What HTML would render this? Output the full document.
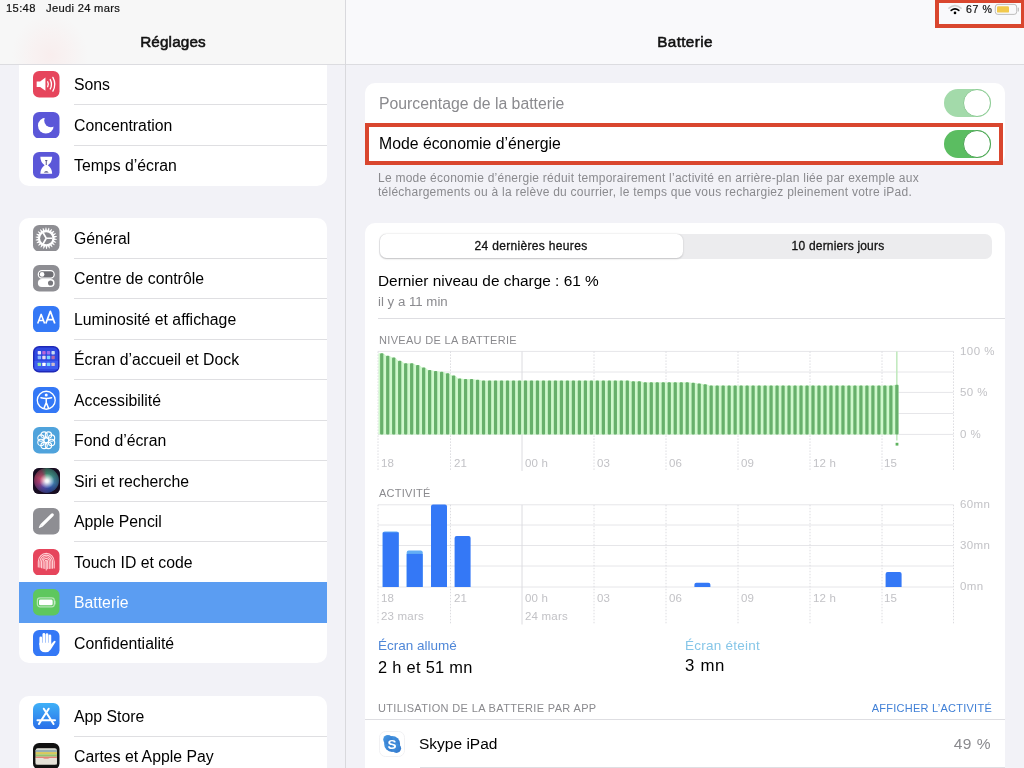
<!DOCTYPE html>
<html><head><meta charset="utf-8"><title>Batterie</title>
<style>
html,body{margin:0;padding:0;}
body{width:1024px;height:768px;overflow:hidden;position:relative;background:#f2f2f7;font-family:"Liberation Sans", sans-serif;}
.t{position:absolute;white-space:nowrap;-webkit-font-smoothing:antialiased;will-change:transform;}
.r{position:absolute;}
.ic{position:absolute;}
.ic svg{display:block;}
</style></head><body>
<div class="r" style="left:0px;top:0px;width:1024px;height:768px;background:#f2f2f7;border-radius:0px;"></div><div class="r" style="left:19px;top:20px;width:308px;height:165.5px;background:#fff;border-radius:10px;"></div><div class="ic" style="left:33px;top:71.00px;width:26.5px;height:26.5px;"><svg width="100%" height="100%" viewBox="0 0 26 26"><rect width="26" height="26" rx="6" fill="#e6455c"/><path d="M3.6 10.2h3.4l5.2-3.8v13l-5.2-3.8H3.6z" fill="#fff"/><path d="M14.4 10.6q1.3 2.4 0 4.8M16.9 8.4q2.5 4.6 0 9.2M19.5 6.2q3.7 6.8 0 13.6" stroke="#fff" stroke-width="1.3" fill="none" stroke-linecap="round"/></svg></div><div class="t" style="left:73.6px;top:77.18px;font-size:15.8px;line-height:15.8px;color:#000;font-weight:400;">Sons</div><div class="r" style="left:73.6px;top:104.0px;width:253.4px;height:0.6px;background:#dfdfe2;border-radius:0px;"></div><div class="ic" style="left:33px;top:111.50px;width:26.5px;height:26.5px;"><svg width="100%" height="100%" viewBox="0 0 26 26"><rect width="26" height="26" rx="6" fill="#5b57d8"/><circle cx="12.6" cy="13.4" r="7.7" fill="#fff"/><circle cx="17.6" cy="8.4" r="6.6" fill="#5b57d8"/></svg></div><div class="t" style="left:73.6px;top:117.68px;font-size:15.8px;line-height:15.8px;color:#000;font-weight:400;">Concentration</div><div class="r" style="left:73.6px;top:144.5px;width:253.4px;height:0.6px;background:#dfdfe2;border-radius:0px;"></div><div class="ic" style="left:33px;top:152.00px;width:26.5px;height:26.5px;"><svg width="100%" height="100%" viewBox="0 0 26 26"><rect width="26" height="26" rx="6" fill="#5b57d8"/><path d="M7.2 4.7H18.8Q18.8 10 14.6 13Q18.8 16 18.8 21.3H7.2Q7.2 16 11.4 13Q7.2 10 7.2 4.7z" fill="#fff"/><path d="M13 8.4v4.4M11.9 8.4h2.2" stroke="#3a3870" stroke-width="0.8"/><path d="M10.6 20.2q2.4-2.4 4.8 0z" fill="#3a3870"/></svg></div><div class="t" style="left:73.6px;top:158.18px;font-size:15.8px;line-height:15.8px;color:#000;font-weight:400;">Temps d’écran</div><div class="r" style="left:73.6px;top:63.5px;width:253.4px;height:0.6px;background:#dcdce0;border-radius:0px;"></div><div class="r" style="left:19px;top:217.5px;width:308px;height:445.5px;background:#fff;border-radius:10px;"></div><div class="ic" style="left:33px;top:224.50px;width:26.5px;height:26.5px;"><svg width="100%" height="100%" viewBox="0 0 26 26"><rect width="26" height="26" rx="6" fill="#8e8e93"/><polygon points="21.00,13.00 23.46,13.90 23.39,14.49 20.79,14.81 20.68,15.25 22.78,16.81 22.55,17.36 19.97,16.93 19.73,17.33 21.31,19.41 20.94,19.88 18.58,18.74 18.24,19.05 19.17,21.49 18.68,21.83 16.73,20.08 16.32,20.28 16.53,22.89 15.96,23.07 14.59,20.84 14.14,20.92 13.60,23.48 13.00,23.50 12.32,20.97 11.86,20.92 10.62,23.23 10.04,23.07 10.10,20.45 9.68,20.28 7.84,22.14 7.32,21.83 8.11,19.34 7.76,19.05 5.47,20.32 5.06,19.88 6.53,17.70 6.27,17.33 3.71,17.90 3.45,17.36 5.47,15.69 5.32,15.25 2.71,15.09 2.61,14.49 5.01,13.46 5.00,13.00 2.54,12.10 2.61,11.51 5.21,11.19 5.32,10.75 3.22,9.19 3.45,8.64 6.03,9.07 6.27,8.67 4.69,6.59 5.06,6.12 7.42,7.26 7.76,6.95 6.83,4.51 7.32,4.17 9.27,5.92 9.68,5.72 9.47,3.11 10.04,2.93 11.41,5.16 11.86,5.08 12.40,2.52 13.00,2.50 13.68,5.03 14.14,5.08 15.38,2.77 15.96,2.93 15.90,5.55 16.32,5.72 18.16,3.86 18.68,4.17 17.89,6.66 18.24,6.95 20.53,5.68 20.94,6.12 19.47,8.30 19.73,8.67 22.29,8.10 22.55,8.64 20.53,10.31 20.68,10.75 23.29,10.91 23.39,11.51 20.99,12.54" fill="#fff"/><circle cx="13" cy="13" r="6.0" fill="#88888d"/><path d="M13 13H19.2M13 13L9.9 7.6M13 13L9.9 18.4" stroke="#fff" stroke-width="1.6"/></svg></div><div class="t" style="left:73.6px;top:230.68px;font-size:15.8px;line-height:15.8px;color:#000;font-weight:400;">Général</div><div class="r" style="left:73.6px;top:257.5px;width:253.4px;height:0.6px;background:#dfdfe2;border-radius:0px;"></div><div class="ic" style="left:33px;top:265.00px;width:26.5px;height:26.5px;"><svg width="100%" height="100%" viewBox="0 0 26 26"><rect width="26" height="26" rx="6" fill="#8e8e93"/><rect x="5.2" y="5.6" width="15.6" height="7.2" rx="3.6" fill="#6f6f74" stroke="#fff" stroke-width="1.2"/><circle cx="8.9" cy="9.2" r="2.3" fill="#fff"/><rect x="4.8" y="13.8" width="16.4" height="7.8" rx="3.9" fill="#fff"/><circle cx="17.2" cy="17.7" r="2.5" fill="#77777c"/></svg></div><div class="t" style="left:73.6px;top:271.18px;font-size:15.8px;line-height:15.8px;color:#000;font-weight:400;">Centre de contrôle</div><div class="r" style="left:73.6px;top:298.0px;width:253.4px;height:0.6px;background:#dfdfe2;border-radius:0px;"></div><div class="ic" style="left:33px;top:305.50px;width:26.5px;height:26.5px;"><svg width="100%" height="100%" viewBox="0 0 26 26"><rect width="26" height="26" rx="6" fill="#3478f6"/><path d="M4.6 17.2L8 8.2l3.4 9M5.9 14.2h4.2" stroke="#fff" stroke-width="1.5" fill="none" stroke-linejoin="round"/><path d="M12.6 17.2L17 5.2l4.4 12M14.3 13.3h5.4" stroke="#fff" stroke-width="1.7" fill="none" stroke-linejoin="round"/></svg></div><div class="t" style="left:73.6px;top:311.68px;font-size:15.8px;line-height:15.8px;color:#000;font-weight:400;">Luminosité et affichage</div><div class="r" style="left:73.6px;top:338.5px;width:253.4px;height:0.6px;background:#dfdfe2;border-radius:0px;"></div><div class="ic" style="left:33px;top:346.00px;width:26.5px;height:26.5px;"><svg width="100%" height="100%" viewBox="0 0 26 26"><rect width="26" height="26" rx="6" fill="#1e28b8"/><rect x="1.4" y="1.4" width="23.2" height="23.2" rx="4.8" fill="#2f48e0"/><rect x="1.4" y="14.6" width="23.2" height="8" fill="#3d5cf0"/><rect x="4.6" y="5.0" width="3.3" height="3.3" rx="0.6" fill="#e6e4ff"/><rect x="9.1" y="5.0" width="3.3" height="3.3" rx="0.6" fill="#b966d8"/><rect x="13.6" y="5.0" width="3.3" height="3.3" rx="0.6" fill="#9a6ef0"/><rect x="18.1" y="5.0" width="3.3" height="3.3" rx="0.6" fill="#c9dcf2"/><rect x="4.6" y="9.6" width="3.3" height="3.3" rx="0.6" fill="#86b6ff"/><rect x="9.1" y="9.6" width="3.3" height="3.3" rx="0.6" fill="#ead6ea"/><rect x="13.6" y="9.6" width="3.3" height="3.3" rx="0.6" fill="#7fd4ff"/><rect x="18.1" y="9.6" width="3.3" height="3.3" rx="0.6" fill="#b56aa6"/><rect x="4.6" y="16.4" width="3.3" height="3.3" rx="0.6" fill="#93e2ab"/><rect x="9.1" y="16.4" width="3.3" height="3.3" rx="0.6" fill="#ffffff"/><rect x="13.6" y="16.4" width="3.3" height="3.3" rx="0.6" fill="#7fd2ff"/><rect x="18.1" y="16.4" width="3.3" height="3.3" rx="0.6" fill="#ccbccc"/></svg></div><div class="t" style="left:73.6px;top:352.18px;font-size:15.8px;line-height:15.8px;color:#000;font-weight:400;">Écran d’accueil et Dock</div><div class="r" style="left:73.6px;top:379.0px;width:253.4px;height:0.6px;background:#dfdfe2;border-radius:0px;"></div><div class="ic" style="left:33px;top:386.50px;width:26.5px;height:26.5px;"><svg width="100%" height="100%" viewBox="0 0 26 26"><rect width="26" height="26" rx="6" fill="#3478f6"/><circle cx="13" cy="13" r="8.8" fill="none" stroke="#fff" stroke-width="1.3"/><circle cx="13" cy="7.9" r="1.5" fill="#fff"/><path d="M7.8 10.5q5.2 1.5 10.4 0M13 11.2v4l-2.1 5.3M13 15.2l2.1 5.3" stroke="#fff" stroke-width="1.5" fill="none" stroke-linecap="round" stroke-linejoin="round"/></svg></div><div class="t" style="left:73.6px;top:392.68px;font-size:15.8px;line-height:15.8px;color:#000;font-weight:400;">Accessibilité</div><div class="r" style="left:73.6px;top:419.5px;width:253.4px;height:0.6px;background:#dfdfe2;border-radius:0px;"></div><div class="ic" style="left:33px;top:427.00px;width:26.5px;height:26.5px;"><svg width="100%" height="100%" viewBox="0 0 26 26"><rect width="26" height="26" rx="6" fill="#4fa3dc"/><circle cx="18.17" cy="15.14" r="3.1" fill="none" stroke="#fff" stroke-width="1.1"/><circle cx="15.14" cy="18.17" r="3.1" fill="none" stroke="#fff" stroke-width="1.1"/><circle cx="10.86" cy="18.17" r="3.1" fill="none" stroke="#fff" stroke-width="1.1"/><circle cx="7.83" cy="15.14" r="3.1" fill="none" stroke="#fff" stroke-width="1.1"/><circle cx="7.83" cy="10.86" r="3.1" fill="none" stroke="#fff" stroke-width="1.1"/><circle cx="10.86" cy="7.83" r="3.1" fill="none" stroke="#fff" stroke-width="1.1"/><circle cx="15.14" cy="7.83" r="3.1" fill="none" stroke="#fff" stroke-width="1.1"/><circle cx="18.17" cy="10.86" r="3.1" fill="none" stroke="#fff" stroke-width="1.1"/><circle cx="13" cy="13" r="2.4" fill="none" stroke="#fff" stroke-width="1"/></svg></div><div class="t" style="left:73.6px;top:433.18px;font-size:15.8px;line-height:15.8px;color:#000;font-weight:400;">Fond d’écran</div><div class="r" style="left:73.6px;top:460.0px;width:253.4px;height:0.6px;background:#dfdfe2;border-radius:0px;"></div><div class="ic" style="left:33px;top:467.50px;width:26.5px;height:26.5px;"><div style="width:100%;height:100%;border-radius:6px;overflow:hidden;position:relative;background:#1b1024;"><div style="position:absolute;left:0.8px;top:0.8px;right:0.8px;bottom:0.8px;border-radius:50%;background:radial-gradient(circle at 52% 52%, #ffffff 0, rgba(255,255,255,0.9) 9%, rgba(255,255,255,0) 40%),conic-gradient(from 0deg, #3f8a6e 0deg, #3f8f8a 60deg, #3f7fb0 110deg, #3050a8 160deg, #5a48a0 210deg, #a8407a 255deg, #c0486a 290deg, #904a60 330deg, #3f8a6e 360deg);"></div><div style="position:absolute;left:0;top:0;right:0;bottom:0;background:radial-gradient(circle at 50% 50%, rgba(20,10,30,0) 35%, rgba(20,10,30,0.45) 70%, rgba(20,10,30,0.85) 100%);"></div></div></div><div class="t" style="left:73.6px;top:473.68px;font-size:15.8px;line-height:15.8px;color:#000;font-weight:400;">Siri et recherche</div><div class="r" style="left:73.6px;top:500.5px;width:253.4px;height:0.6px;background:#dfdfe2;border-radius:0px;"></div><div class="ic" style="left:33px;top:508.00px;width:26.5px;height:26.5px;"><svg width="100%" height="100%" viewBox="0 0 26 26"><rect width="26" height="26" rx="6" fill="#8e8e93"/><path d="M20 5.6q1.1 1.1 0 2.2L9.3 18.5l-2.3-2.3L17.8 5.6q1.1-1.1 2.2 0z" fill="#fff"/><path d="M7 16.2l2.3 2.3l-3.1 1.1q-0.7 0.1-0.4-0.6z" fill="#fff"/></svg></div><div class="t" style="left:73.6px;top:514.18px;font-size:15.8px;line-height:15.8px;color:#000;font-weight:400;">Apple Pencil</div><div class="r" style="left:73.6px;top:541.0px;width:253.4px;height:0.6px;background:#dfdfe2;border-radius:0px;"></div><div class="ic" style="left:33px;top:548.50px;width:26.5px;height:26.5px;"><svg width="100%" height="100%" viewBox="0 0 26 26"><rect width="26" height="26" rx="6" fill="#e6455c"/><path d="M11.6 19.1V12.5a1.4 1.47 0 0 1 2.8 0V19.4" fill="none" stroke="#ffd0d4" stroke-width="1.05" stroke-linecap="round"/><path d="M10.0 18.8V12.5a3.0 3.15 0 0 1 6.0 0V19.2" fill="none" stroke="#ffd0d4" stroke-width="1.05" stroke-linecap="round"/><path d="M8.4 18.4V12.5a4.6 4.83 0 0 1 9.2 0V19.0" fill="none" stroke="#ffd0d4" stroke-width="1.05" stroke-linecap="round"/><path d="M6.8 17.9V12.5a6.2 6.51 0 0 1 12.4 0V18.9" fill="none" stroke="#ffd0d4" stroke-width="1.05" stroke-linecap="round"/><path d="M5.2 17.6V12.5a7.8 8.19 0 0 1 15.6 0V18.7" fill="none" stroke="#ffd0d4" stroke-width="1.05" stroke-linecap="round"/><path d="M13 11.5v9" stroke="#ffd0d4" stroke-width="1.05" stroke-linecap="round"/></svg></div><div class="t" style="left:73.6px;top:554.68px;font-size:15.8px;line-height:15.8px;color:#000;font-weight:400;">Touch ID et code</div><div class="r" style="left:19px;top:582.0px;width:308px;height:40.5px;background:#5b9df2;border-radius:0px;"></div><div class="ic" style="left:33px;top:589.00px;width:26.5px;height:26.5px;"><svg width="100%" height="100%" viewBox="0 0 26 26"><rect width="26" height="26" rx="6" fill="#5ec75e"/><rect x="4.3" y="8.8" width="16.6" height="8.8" rx="2.6" fill="none" stroke="#fff" stroke-opacity="0.55" stroke-width="1.2"/><rect x="5.9" y="10.4" width="13.4" height="5.6" rx="1.4" fill="#fff"/><path d="M21.6 11.8v2.8" stroke="#fff" stroke-opacity="0.5" stroke-width="1.2" stroke-linecap="round"/></svg></div><div class="t" style="left:73.6px;top:595.18px;font-size:15.8px;line-height:15.8px;color:#fff;font-weight:400;">Batterie</div><div class="ic" style="left:33px;top:629.50px;width:26.5px;height:26.5px;"><svg width="100%" height="100%" viewBox="0 0 26 26"><rect width="26" height="26" rx="6" fill="#3478f6"/><rect x="6.3" y="6.4" width="2.7" height="9" rx="1.35" fill="#fff"/><rect x="9.3" y="3.0" width="2.75" height="12" rx="1.37" fill="#fff"/><rect x="12.35" y="3.2" width="2.75" height="12" rx="1.37" fill="#fff"/><rect x="15.3" y="4.3" width="2.6" height="11" rx="1.3" fill="#fff"/><path d="M6.3 12.5V16q0 5.9 5.9 5.9q3.4 0 5.2-2.8l4.6-7.2q0.7-1.3-0.6-1.4q-1 0-2 1.5l-1.5 2.3V12.5z" fill="#fff"/></svg></div><div class="t" style="left:73.6px;top:635.68px;font-size:15.8px;line-height:15.8px;color:#000;font-weight:400;">Confidentialité</div><div class="r" style="left:19px;top:695.8px;width:308px;height:121.5px;background:#fff;border-radius:10px;"></div><div class="ic" style="left:33px;top:702.80px;width:26.5px;height:26.5px;"><svg width="100%" height="100%" viewBox="0 0 26 26"><defs><linearGradient id="ag" x1="0" y1="0" x2="0" y2="1"><stop offset="0" stop-color="#3fb0f7"/><stop offset="1" stop-color="#2a6ee9"/></linearGradient></defs><rect width="26" height="26" rx="6" fill="url(#ag)"/><path d="M10.6 5.6l9.6 15M15.4 5.6l-9.6 15M4.4 16.9h17.2" stroke="#fff" stroke-width="2" stroke-linecap="round"/></svg></div><div class="t" style="left:73.6px;top:708.98px;font-size:15.8px;line-height:15.8px;color:#000;font-weight:400;">App Store</div><div class="r" style="left:73.6px;top:735.8px;width:253.4px;height:0.6px;background:#dfdfe2;border-radius:0px;"></div><div class="ic" style="left:33px;top:743.30px;width:26.5px;height:26.5px;"><svg width="100%" height="100%" viewBox="0 0 26 26"><rect width="26" height="26" rx="6" fill="#111"/><rect x="2.6" y="5.2" width="20.8" height="16" rx="2" fill="#e9e6dc"/><rect x="2.6" y="6.6" width="20.8" height="2.3" fill="#97aeb4"/><rect x="2.6" y="8.9" width="20.8" height="2.3" fill="#d8c95c"/><rect x="2.6" y="11.2" width="20.8" height="2.2" fill="#94c46e"/><rect x="2.6" y="13.4" width="20.8" height="2" fill="#e58378"/><path d="M2.6 14.6h7q3.4 2.6 6.8 0h7V21H2.6z" fill="#e6e2d8"/></svg></div><div class="t" style="left:73.6px;top:749.48px;font-size:15.8px;line-height:15.8px;color:#000;font-weight:400;">Cartes et Apple Pay</div><div class="r" style="left:73.6px;top:776.3px;width:253.4px;height:0.6px;background:#dfdfe2;border-radius:0px;"></div><div class="r" style="left:0px;top:0px;width:345px;height:64px;background:rgba(247,247,247,0.97);border-radius:0px;"></div><div class="r" style="left:12px;top:8px;width:76px;height:56px;background:radial-gradient(ellipse 50% 75% at 50% 85%, rgba(255,200,200,0.2), rgba(255,220,220,0) 100%);"></div><div class="r" style="left:0px;top:64px;width:345px;height:0.7px;background:#dcdce0;border-radius:0px;"></div><div class="t" style="left:173.2px;top:33.65px;font-size:15.3px;line-height:15.3px;color:#111;font-weight:400;letter-spacing:0.12px;transform:translateX(-50%);-webkit-text-stroke:0.55px #111;">Réglages</div><div class="r" style="left:344.6px;top:0px;width:0.9px;height:768px;background:#d9d9dd;border-radius:0px;"></div><div class="r" style="left:345.5px;top:0px;width:678.5px;height:64px;background:#f9f9fb;border-radius:0px;"></div><div class="r" style="left:345.5px;top:64px;width:678.5px;height:0.7px;background:#dcdce0;border-radius:0px;"></div><div class="t" style="left:685px;top:33.55px;font-size:15.3px;line-height:15.3px;color:#111;font-weight:400;letter-spacing:0.35px;transform:translateX(-50%);-webkit-text-stroke:0.55px #111;">Batterie</div><div class="t" style="left:6px;top:3.22px;font-size:11.2px;line-height:11.2px;color:#111;font-weight:400;letter-spacing:0.35px;-webkit-text-stroke:0.2px #111;">15:48</div><div class="t" style="left:46.3px;top:3.22px;font-size:11.2px;line-height:11.2px;color:#111;font-weight:400;letter-spacing:0.3px;-webkit-text-stroke:0.2px #111;">Jeudi 24 mars</div><div class="t" style="left:966px;top:3.83px;font-size:10.6px;line-height:10.6px;color:#111;font-weight:400;letter-spacing:0.6px;-webkit-text-stroke:0.2px #111;">67 %</div><svg class="r" style="left:948px;top:4px;" width="14" height="11" viewBox="0 0 14 11"><path d="M1 4.2q6-5 12 0" stroke="#d0d0d0" stroke-width="1.6" fill="none" stroke-linecap="round"/><path d="M3.2 6.4q3.8-3.2 7.6 0" stroke="#000" stroke-width="1.6" fill="none" stroke-linecap="round"/><circle cx="7" cy="8.9" r="1.3" fill="#000"/></svg><svg class="r" style="left:994px;top:3px;" width="28" height="13" viewBox="0 0 28 13"><rect x="1.3" y="1.4" width="21.4" height="10" rx="2.6" fill="none" stroke="#bdbdbd" stroke-width="1"/><rect x="3" y="3.2" width="12" height="6.4" rx="1.2" fill="#f2c94c"/><path d="M24.3 5v3" stroke="#bdbdbd" stroke-width="1.2" stroke-linecap="round"/></svg><div class="r" style="left:935.2px;top:-1.3px;width:90.2px;height:29.6px;box-sizing:border-box;border:4.2px solid #d9462e;"></div><div class="r" style="left:364.5px;top:83px;width:640.5px;height:81.5px;background:#fff;border-radius:10px;"></div><div class="t" style="left:378.6px;top:95.93px;font-size:15.8px;line-height:15.8px;color:#8a8a8e;font-weight:400;">Pourcentage de la batterie</div><div class="t" style="left:378.6px;top:136.13px;font-size:15.8px;line-height:15.8px;color:#000;font-weight:400;">Mode économie d’énergie</div><div class="r" style="left:944px;top:89px;width:47px;height:28px;border-radius:14px;background:#a3daaa;"></div><div class="r" style="left:963.2px;top:89px;width:28px;height:28px;border-radius:50%;background:#fff;box-sizing:border-box;border:1.6px solid #8ccb94;"></div><div class="r" style="left:944px;top:130px;width:47px;height:28px;border-radius:14px;background:#5bbd61;"></div><div class="r" style="left:963.2px;top:130px;width:28px;height:28px;border-radius:50%;background:#fff;box-sizing:border-box;border:1.6px solid #4aa352;"></div><div class="r" style="left:365px;top:123px;width:638px;height:42.3px;box-sizing:border-box;border:4.3px solid #d9462e;"></div><div class="t" style="left:378.4px;top:172.04px;font-size:12px;line-height:12px;color:#8a8a8e;font-weight:400;letter-spacing:0.25px;">Le mode économie d’énergie réduit temporairement l’activité en arrière-plan liée par exemple aux</div><div class="t" style="left:378.4px;top:186.44px;font-size:12px;line-height:12px;color:#8a8a8e;font-weight:400;letter-spacing:0.25px;">téléchargements ou à la relève du courrier, le temps que vous rechargiez pleinement votre iPad.</div><div class="r" style="left:364.5px;top:223px;width:640.5px;height:600px;background:#fff;border-radius:10px;"></div><div class="r" style="left:378.5px;top:233.5px;width:613.5px;height:25.5px;background:#ececee;border-radius:7px;"></div><div class="r" style="left:379.5px;top:234.3px;width:303px;height:24px;background:#fff;border-radius:6.5px;box-shadow:0 0.5px 2px rgba(0,0,0,0.18);"></div><div class="t" style="left:531.1px;top:240.14px;font-size:12px;line-height:12px;color:#111;font-weight:400;letter-spacing:0.33px;transform:translateX(-50%);-webkit-text-stroke:0.3px #111;">24 dernières heures</div><div class="t" style="left:838.3px;top:240.14px;font-size:12px;line-height:12px;color:#111;font-weight:400;letter-spacing:0.2px;transform:translateX(-50%);-webkit-text-stroke:0.3px #111;">10 derniers jours</div><div class="t" style="left:378px;top:273.16px;font-size:15.4px;line-height:15.4px;color:#000;font-weight:400;">Dernier niveau de charge : 61 %</div><div class="t" style="left:378px;top:295.18px;font-size:13.25px;line-height:13.25px;color:#8a8a8e;font-weight:400;">il y a 11 min</div><div class="r" style="left:378px;top:317.6px;width:627px;height:0.7px;background:#dedee2;border-radius:0px;"></div><div class="t" style="left:378.8px;top:334.89px;font-size:11px;line-height:11px;color:#8a8a8e;font-weight:400;letter-spacing:0.32px;">NIVEAU DE LA BATTERIE</div><svg class="r" style="left:0;top:0" width="1024" height="768" viewBox="0 0 1024 768"><line x1="378" y1="351.4" x2="953.5" y2="351.4" stroke="#e6e6e9" stroke-width="1"/><line x1="378" y1="372" x2="953.5" y2="372" stroke="#e6e6e9" stroke-width="1"/><line x1="378" y1="392.4" x2="953.5" y2="392.4" stroke="#e6e6e9" stroke-width="1"/><line x1="378" y1="413.5" x2="953.5" y2="413.5" stroke="#e6e6e9" stroke-width="1"/><line x1="378" y1="434.4" x2="953.5" y2="434.4" stroke="#e6e6e9" stroke-width="1"/><line x1="378" y1="351.4" x2="378" y2="471" stroke="#dcdce0" stroke-width="1" stroke-dasharray="1.5 1.5"/><line x1="450.5" y1="351.4" x2="450.5" y2="471" stroke="#dcdce0" stroke-width="1" stroke-dasharray="1.5 1.5"/><line x1="522" y1="351.4" x2="522" y2="471" stroke="#dcdce0" stroke-width="1"/><line x1="594" y1="351.4" x2="594" y2="471" stroke="#dcdce0" stroke-width="1" stroke-dasharray="1.5 1.5"/><line x1="666" y1="351.4" x2="666" y2="471" stroke="#dcdce0" stroke-width="1" stroke-dasharray="1.5 1.5"/><line x1="738" y1="351.4" x2="738" y2="471" stroke="#dcdce0" stroke-width="1" stroke-dasharray="1.5 1.5"/><line x1="810" y1="351.4" x2="810" y2="471" stroke="#dcdce0" stroke-width="1" stroke-dasharray="1.5 1.5"/><line x1="882" y1="351.4" x2="882" y2="471" stroke="#dcdce0" stroke-width="1" stroke-dasharray="1.5 1.5"/><line x1="953.5" y1="351.4" x2="953.5" y2="471" stroke="#dcdce0" stroke-width="1" stroke-dasharray="1.5 1.5"/><polygon points="378.5,434.4 378.5,353.3 380.1,353.3 383.4,353.3 386.1,355.7 389.3,355.7 392.1,357.6 395.3,357.6 398.1,360.8 401.3,360.8 404.1,363.3 407.3,363.3 410.1,363.3 413.3,363.3 416.0,365.1 419.3,365.1 422.0,367.4 425.3,367.4 428.0,370.0 431.3,370.0 434.0,370.9 437.3,370.9 440.0,371.7 443.2,371.7 446.0,373.3 449.2,373.3 452.0,375.6 455.2,375.6 458.0,378.4 461.2,378.4 464.0,379.1 467.2,379.1 470.0,379.1 473.2,379.1 475.9,379.8 479.2,379.8 481.9,380.6 485.2,380.6 487.9,380.6 491.2,380.6 493.9,380.6 497.2,380.6 499.9,380.6 503.2,380.6 505.9,380.6 509.1,380.6 511.9,380.6 515.1,380.6 517.9,380.6 521.1,380.6 523.9,380.6 527.1,380.6 529.9,380.6 533.1,380.6 535.8,380.6 539.1,380.6 541.8,380.6 545.1,380.6 547.8,380.6 551.1,380.6 553.8,380.6 557.1,380.6 559.8,380.6 563.1,380.6 565.8,380.6 569.0,380.6 571.8,380.6 575.0,380.6 577.8,380.6 581.0,380.6 583.8,380.6 587.0,380.6 589.8,380.6 593.0,380.6 595.7,380.6 599.0,380.6 601.7,380.4 605.0,380.4 607.7,380.4 611.0,380.4 613.7,380.4 617.0,380.4 619.7,380.4 623.0,380.4 625.7,380.4 628.9,380.4 631.7,381.3 634.9,381.3 637.7,381.3 640.9,381.3 643.7,382.2 646.9,382.2 649.7,382.2 652.9,382.2 655.6,382.2 658.9,382.2 661.6,382.2 664.9,382.2 667.6,382.2 670.9,382.2 673.6,382.2 676.9,382.2 679.6,382.2 682.9,382.2 685.6,382.2 688.8,382.2 691.6,382.8 694.8,382.8 697.6,383.5 700.8,383.5 703.6,384.3 706.8,384.3 709.5,385.6 712.8,385.6 715.5,385.6 718.8,385.6 721.5,385.6 724.8,385.6 727.5,385.6 730.8,385.6 733.5,385.6 736.8,385.6 739.5,385.6 742.8,385.6 745.5,385.6 748.7,385.6 751.5,385.6 754.7,385.6 757.5,385.6 760.7,385.6 763.5,385.6 766.7,385.6 769.5,385.6 772.7,385.6 775.4,385.6 778.7,385.6 781.4,385.6 784.7,385.6 787.4,385.6 790.7,385.6 793.4,385.6 796.7,385.6 799.4,385.6 802.7,385.6 805.4,385.6 808.6,385.6 811.4,385.6 814.6,385.6 817.4,385.6 820.6,385.6 823.4,385.6 826.6,385.6 829.4,385.6 832.6,385.6 835.3,385.6 838.6,385.6 841.3,385.6 844.6,385.6 847.3,385.6 850.6,385.6 853.3,385.6 856.6,385.6 859.3,385.6 862.6,385.6 865.3,385.6 868.5,385.6 871.3,385.6 874.5,385.6 877.3,385.6 880.5,385.6 883.3,385.6 886.5,385.6 889.2,385.6 892.5,385.6 895.2,384.8 898.5,384.8 898.49,434.4" fill="#cff8cc"/><line x1="896.8" y1="351.4" x2="896.8" y2="440.5" stroke="#c3eac0" stroke-width="1.6"/><rect x="380.10" y="353.3" width="3.25" height="81.1" rx="1" fill="#67b06b"/><rect x="386.09" y="355.7" width="3.25" height="78.7" rx="1" fill="#67b06b"/><rect x="392.08" y="357.6" width="3.25" height="76.8" rx="1" fill="#67b06b"/><rect x="398.07" y="360.8" width="3.25" height="73.6" rx="1" fill="#67b06b"/><rect x="404.06" y="363.3" width="3.25" height="71.1" rx="1" fill="#67b06b"/><rect x="410.05" y="363.3" width="3.25" height="71.1" rx="1" fill="#67b06b"/><rect x="416.04" y="365.1" width="3.25" height="69.3" rx="1" fill="#67b06b"/><rect x="422.03" y="367.4" width="3.25" height="67.0" rx="1" fill="#67b06b"/><rect x="428.02" y="370" width="3.25" height="64.4" rx="1" fill="#67b06b"/><rect x="434.01" y="370.9" width="3.25" height="63.5" rx="1" fill="#67b06b"/><rect x="440.00" y="371.7" width="3.25" height="62.7" rx="1" fill="#67b06b"/><rect x="445.99" y="373.3" width="3.25" height="61.1" rx="1" fill="#67b06b"/><rect x="451.98" y="375.6" width="3.25" height="58.8" rx="1" fill="#67b06b"/><rect x="457.97" y="378.4" width="3.25" height="56.0" rx="1" fill="#67b06b"/><rect x="463.96" y="379.1" width="3.25" height="55.3" rx="1" fill="#67b06b"/><rect x="469.95" y="379.1" width="3.25" height="55.3" rx="1" fill="#67b06b"/><rect x="475.94" y="379.8" width="3.25" height="54.6" rx="1" fill="#67b06b"/><rect x="481.93" y="380.6" width="3.25" height="53.8" rx="1" fill="#67b06b"/><rect x="487.92" y="380.6" width="3.25" height="53.8" rx="1" fill="#67b06b"/><rect x="493.91" y="380.6" width="3.25" height="53.8" rx="1" fill="#67b06b"/><rect x="499.90" y="380.6" width="3.25" height="53.8" rx="1" fill="#67b06b"/><rect x="505.89" y="380.6" width="3.25" height="53.8" rx="1" fill="#67b06b"/><rect x="511.88" y="380.6" width="3.25" height="53.8" rx="1" fill="#67b06b"/><rect x="517.87" y="380.6" width="3.25" height="53.8" rx="1" fill="#67b06b"/><rect x="523.86" y="380.6" width="3.25" height="53.8" rx="1" fill="#67b06b"/><rect x="529.85" y="380.6" width="3.25" height="53.8" rx="1" fill="#67b06b"/><rect x="535.84" y="380.6" width="3.25" height="53.8" rx="1" fill="#67b06b"/><rect x="541.83" y="380.6" width="3.25" height="53.8" rx="1" fill="#67b06b"/><rect x="547.82" y="380.6" width="3.25" height="53.8" rx="1" fill="#67b06b"/><rect x="553.81" y="380.6" width="3.25" height="53.8" rx="1" fill="#67b06b"/><rect x="559.80" y="380.6" width="3.25" height="53.8" rx="1" fill="#67b06b"/><rect x="565.79" y="380.6" width="3.25" height="53.8" rx="1" fill="#67b06b"/><rect x="571.78" y="380.6" width="3.25" height="53.8" rx="1" fill="#67b06b"/><rect x="577.77" y="380.6" width="3.25" height="53.8" rx="1" fill="#67b06b"/><rect x="583.76" y="380.6" width="3.25" height="53.8" rx="1" fill="#67b06b"/><rect x="589.75" y="380.6" width="3.25" height="53.8" rx="1" fill="#67b06b"/><rect x="595.74" y="380.6" width="3.25" height="53.8" rx="1" fill="#67b06b"/><rect x="601.73" y="380.4" width="3.25" height="54.0" rx="1" fill="#67b06b"/><rect x="607.72" y="380.4" width="3.25" height="54.0" rx="1" fill="#67b06b"/><rect x="613.71" y="380.4" width="3.25" height="54.0" rx="1" fill="#67b06b"/><rect x="619.70" y="380.4" width="3.25" height="54.0" rx="1" fill="#67b06b"/><rect x="625.69" y="380.4" width="3.25" height="54.0" rx="1" fill="#67b06b"/><rect x="631.68" y="381.3" width="3.25" height="53.1" rx="1" fill="#67b06b"/><rect x="637.67" y="381.3" width="3.25" height="53.1" rx="1" fill="#67b06b"/><rect x="643.66" y="382.2" width="3.25" height="52.2" rx="1" fill="#67b06b"/><rect x="649.65" y="382.2" width="3.25" height="52.2" rx="1" fill="#67b06b"/><rect x="655.64" y="382.2" width="3.25" height="52.2" rx="1" fill="#67b06b"/><rect x="661.63" y="382.2" width="3.25" height="52.2" rx="1" fill="#67b06b"/><rect x="667.62" y="382.2" width="3.25" height="52.2" rx="1" fill="#67b06b"/><rect x="673.61" y="382.2" width="3.25" height="52.2" rx="1" fill="#67b06b"/><rect x="679.60" y="382.2" width="3.25" height="52.2" rx="1" fill="#67b06b"/><rect x="685.59" y="382.2" width="3.25" height="52.2" rx="1" fill="#67b06b"/><rect x="691.58" y="382.8" width="3.25" height="51.6" rx="1" fill="#67b06b"/><rect x="697.57" y="383.5" width="3.25" height="50.9" rx="1" fill="#67b06b"/><rect x="703.56" y="384.3" width="3.25" height="50.1" rx="1" fill="#67b06b"/><rect x="709.55" y="385.6" width="3.25" height="48.8" rx="1" fill="#67b06b"/><rect x="715.54" y="385.6" width="3.25" height="48.8" rx="1" fill="#67b06b"/><rect x="721.53" y="385.6" width="3.25" height="48.8" rx="1" fill="#67b06b"/><rect x="727.52" y="385.6" width="3.25" height="48.8" rx="1" fill="#67b06b"/><rect x="733.51" y="385.6" width="3.25" height="48.8" rx="1" fill="#67b06b"/><rect x="739.50" y="385.6" width="3.25" height="48.8" rx="1" fill="#67b06b"/><rect x="745.49" y="385.6" width="3.25" height="48.8" rx="1" fill="#67b06b"/><rect x="751.48" y="385.6" width="3.25" height="48.8" rx="1" fill="#67b06b"/><rect x="757.47" y="385.6" width="3.25" height="48.8" rx="1" fill="#67b06b"/><rect x="763.46" y="385.6" width="3.25" height="48.8" rx="1" fill="#67b06b"/><rect x="769.45" y="385.6" width="3.25" height="48.8" rx="1" fill="#67b06b"/><rect x="775.44" y="385.6" width="3.25" height="48.8" rx="1" fill="#67b06b"/><rect x="781.43" y="385.6" width="3.25" height="48.8" rx="1" fill="#67b06b"/><rect x="787.42" y="385.6" width="3.25" height="48.8" rx="1" fill="#67b06b"/><rect x="793.41" y="385.6" width="3.25" height="48.8" rx="1" fill="#67b06b"/><rect x="799.40" y="385.6" width="3.25" height="48.8" rx="1" fill="#67b06b"/><rect x="805.39" y="385.6" width="3.25" height="48.8" rx="1" fill="#67b06b"/><rect x="811.38" y="385.6" width="3.25" height="48.8" rx="1" fill="#67b06b"/><rect x="817.37" y="385.6" width="3.25" height="48.8" rx="1" fill="#67b06b"/><rect x="823.36" y="385.6" width="3.25" height="48.8" rx="1" fill="#67b06b"/><rect x="829.35" y="385.6" width="3.25" height="48.8" rx="1" fill="#67b06b"/><rect x="835.34" y="385.6" width="3.25" height="48.8" rx="1" fill="#67b06b"/><rect x="841.33" y="385.6" width="3.25" height="48.8" rx="1" fill="#67b06b"/><rect x="847.32" y="385.6" width="3.25" height="48.8" rx="1" fill="#67b06b"/><rect x="853.31" y="385.6" width="3.25" height="48.8" rx="1" fill="#67b06b"/><rect x="859.30" y="385.6" width="3.25" height="48.8" rx="1" fill="#67b06b"/><rect x="865.29" y="385.6" width="3.25" height="48.8" rx="1" fill="#67b06b"/><rect x="871.28" y="385.6" width="3.25" height="48.8" rx="1" fill="#67b06b"/><rect x="877.27" y="385.6" width="3.25" height="48.8" rx="1" fill="#67b06b"/><rect x="883.26" y="385.6" width="3.25" height="48.8" rx="1" fill="#67b06b"/><rect x="889.25" y="385.6" width="3.25" height="48.8" rx="1" fill="#67b06b"/><rect x="895.24" y="384.8" width="3.25" height="49.6" rx="1" fill="#67b06b"/><rect x="895.6" y="442.8" width="2.8" height="2.8" fill="#5fb35f"/></svg><div class="t" style="left:381.3px;top:458.27px;font-size:11.5px;line-height:11.5px;color:#c2c2c6;font-weight:400;letter-spacing:0.2px;">18</div><div class="t" style="left:453.5px;top:458.27px;font-size:11.5px;line-height:11.5px;color:#c2c2c6;font-weight:400;letter-spacing:0.2px;">21</div><div class="t" style="left:525px;top:458.27px;font-size:11.5px;line-height:11.5px;color:#c2c2c6;font-weight:400;letter-spacing:0.2px;">00 h</div><div class="t" style="left:597px;top:458.27px;font-size:11.5px;line-height:11.5px;color:#c2c2c6;font-weight:400;letter-spacing:0.2px;">03</div><div class="t" style="left:669px;top:458.27px;font-size:11.5px;line-height:11.5px;color:#c2c2c6;font-weight:400;letter-spacing:0.2px;">06</div><div class="t" style="left:741px;top:458.27px;font-size:11.5px;line-height:11.5px;color:#c2c2c6;font-weight:400;letter-spacing:0.2px;">09</div><div class="t" style="left:813px;top:458.27px;font-size:11.5px;line-height:11.5px;color:#c2c2c6;font-weight:400;letter-spacing:0.2px;">12 h</div><div class="t" style="left:884.2px;top:458.27px;font-size:11.5px;line-height:11.5px;color:#c2c2c6;font-weight:400;letter-spacing:0.2px;">15</div><div class="t" style="left:960px;top:345.77px;font-size:11.5px;line-height:11.5px;color:#c2c2c6;font-weight:400;letter-spacing:0.45px;">100 %</div><div class="t" style="left:960px;top:386.87px;font-size:11.5px;line-height:11.5px;color:#c2c2c6;font-weight:400;letter-spacing:0.45px;">50 %</div><div class="t" style="left:960px;top:428.87px;font-size:11.5px;line-height:11.5px;color:#c2c2c6;font-weight:400;letter-spacing:0.45px;">0 %</div><div class="t" style="left:378.8px;top:487.89px;font-size:11px;line-height:11px;color:#8a8a8e;font-weight:400;letter-spacing:0.25px;">ACTIVITÉ</div><svg class="r" style="left:0;top:0" width="1024" height="768" viewBox="0 0 1024 768"><line x1="378" y1="504.8" x2="953.5" y2="504.8" stroke="#e6e6e9" stroke-width="1"/><line x1="378" y1="525" x2="953.5" y2="525" stroke="#e6e6e9" stroke-width="1"/><line x1="378" y1="545.5" x2="953.5" y2="545.5" stroke="#e6e6e9" stroke-width="1"/><line x1="378" y1="566" x2="953.5" y2="566" stroke="#e6e6e9" stroke-width="1"/><line x1="378" y1="587" x2="953.5" y2="587" stroke="#e6e6e9" stroke-width="1"/><line x1="378" y1="504.8" x2="378" y2="624.5" stroke="#dcdce0" stroke-width="1" stroke-dasharray="1.5 1.5"/><line x1="450.5" y1="504.8" x2="450.5" y2="624.5" stroke="#dcdce0" stroke-width="1" stroke-dasharray="1.5 1.5"/><line x1="522" y1="504.8" x2="522" y2="624.5" stroke="#dcdce0" stroke-width="1"/><line x1="594" y1="504.8" x2="594" y2="624.5" stroke="#dcdce0" stroke-width="1" stroke-dasharray="1.5 1.5"/><line x1="666" y1="504.8" x2="666" y2="624.5" stroke="#dcdce0" stroke-width="1" stroke-dasharray="1.5 1.5"/><line x1="738" y1="504.8" x2="738" y2="624.5" stroke="#dcdce0" stroke-width="1" stroke-dasharray="1.5 1.5"/><line x1="810" y1="504.8" x2="810" y2="624.5" stroke="#dcdce0" stroke-width="1" stroke-dasharray="1.5 1.5"/><line x1="882" y1="504.8" x2="882" y2="624.5" stroke="#dcdce0" stroke-width="1" stroke-dasharray="1.5 1.5"/><line x1="953.5" y1="504.8" x2="953.5" y2="624.5" stroke="#dcdce0" stroke-width="1" stroke-dasharray="1.5 1.5"/><path d="M382.7 587V533.6q0-2 2-2h12q2 0 2 2V587z" fill="#63aef5"/><rect x="382.7" y="532.4" width="16" height="54.6" fill="#3478f6"/><path d="M406.7 587V552.4q0-2 2-2h12q2 0 2 2V587z" fill="#63aef5"/><rect x="406.7" y="553.9" width="16" height="33.1" fill="#3478f6"/><path d="M431 587V506.4q0-2 2-2h12q2 0 2 2V587z" fill="#3478f6"/><path d="M454.6 587V538.1q0-2 2-2h12q2 0 2 2V587z" fill="#3478f6"/><path d="M694.4 587V584.7q0-2 2-2h12q2 0 2 2V587z" fill="#3478f6"/><path d="M885.6 587V573.9q0-2 2-2h12q2 0 2 2V587z" fill="#3478f6"/></svg><div class="t" style="left:381.3px;top:593.07px;font-size:11.5px;line-height:11.5px;color:#c2c2c6;font-weight:400;letter-spacing:0.2px;">18</div><div class="t" style="left:453.5px;top:593.07px;font-size:11.5px;line-height:11.5px;color:#c2c2c6;font-weight:400;letter-spacing:0.2px;">21</div><div class="t" style="left:525px;top:593.07px;font-size:11.5px;line-height:11.5px;color:#c2c2c6;font-weight:400;letter-spacing:0.2px;">00 h</div><div class="t" style="left:597px;top:593.07px;font-size:11.5px;line-height:11.5px;color:#c2c2c6;font-weight:400;letter-spacing:0.2px;">03</div><div class="t" style="left:669px;top:593.07px;font-size:11.5px;line-height:11.5px;color:#c2c2c6;font-weight:400;letter-spacing:0.2px;">06</div><div class="t" style="left:741px;top:593.07px;font-size:11.5px;line-height:11.5px;color:#c2c2c6;font-weight:400;letter-spacing:0.2px;">09</div><div class="t" style="left:813px;top:593.07px;font-size:11.5px;line-height:11.5px;color:#c2c2c6;font-weight:400;letter-spacing:0.2px;">12 h</div><div class="t" style="left:884.2px;top:593.07px;font-size:11.5px;line-height:11.5px;color:#c2c2c6;font-weight:400;letter-spacing:0.2px;">15</div><div class="t" style="left:381.3px;top:610.57px;font-size:11.5px;line-height:11.5px;color:#c2c2c6;font-weight:400;letter-spacing:0.2px;">23 mars</div><div class="t" style="left:525px;top:610.57px;font-size:11.5px;line-height:11.5px;color:#c2c2c6;font-weight:400;letter-spacing:0.2px;">24 mars</div><div class="t" style="left:960px;top:499.27px;font-size:11.5px;line-height:11.5px;color:#c2c2c6;font-weight:400;letter-spacing:0.4px;">60mn</div><div class="t" style="left:960px;top:540.27px;font-size:11.5px;line-height:11.5px;color:#c2c2c6;font-weight:400;letter-spacing:0.4px;">30mn</div><div class="t" style="left:960px;top:581.27px;font-size:11.5px;line-height:11.5px;color:#c2c2c6;font-weight:400;letter-spacing:0.4px;">0mn</div><div class="t" style="left:377.8px;top:638.57px;font-size:13.5px;line-height:13.5px;color:#4f87d8;font-weight:400;">Écran allumé</div><div class="t" style="left:377.8px;top:658.72px;font-size:16.4px;line-height:16.4px;color:#000;font-weight:400;letter-spacing:0.3px;">2 h et 51 mn</div><div class="t" style="left:684.8px;top:638.57px;font-size:13.5px;line-height:13.5px;color:#86c6e8;font-weight:400;letter-spacing:0.25px;">Écran éteint</div><div class="t" style="left:684.8px;top:658.38px;font-size:16.8px;line-height:16.8px;color:#000;font-weight:400;letter-spacing:0.7px;">3 mn</div><div class="t" style="left:377.8px;top:702.59px;font-size:11px;line-height:11px;color:#8a8a8e;font-weight:400;letter-spacing:0.35px;">UTILISATION DE LA BATTERIE PAR APP</div><div class="t" style="left:991.6px;top:702.59px;font-size:11px;line-height:11px;color:#3f7fd6;font-weight:400;letter-spacing:0.25px;transform:translateX(-100%);">AFFICHER L’ACTIVITÉ</div><div class="r" style="left:364.5px;top:719.4px;width:640.5px;height:0.7px;background:#dedee2;border-radius:0px;"></div><svg class="r" style="left:379px;top:731px" width="26" height="26" viewBox="0 0 26 26"><rect x="0.5" y="0.5" width="25" height="25" rx="6" fill="#fff" stroke="#f1f1f3"/><defs><linearGradient id="skg" x1="0" y1="0" x2="1" y2="1"><stop offset="0" stop-color="#4a9ee6"/><stop offset="1" stop-color="#2f72c8"/></linearGradient></defs><g fill="url(#skg)"><circle cx="13.1" cy="12.9" r="8"/><circle cx="8.9" cy="8.6" r="4.7"/><circle cx="17.4" cy="17.2" r="4.7"/></g><text x="13.1" y="17.6" text-anchor="middle" font-family="Liberation Sans" font-weight="700" font-size="13.5" fill="#fff">S</text></svg><div class="t" style="left:418.8px;top:736.48px;font-size:15.5px;line-height:15.5px;color:#000;font-weight:400;">Skype iPad</div><div class="t" style="left:990.5px;top:736.48px;font-size:15.5px;line-height:15.5px;color:#8a8a8e;font-weight:400;letter-spacing:0.5px;transform:translateX(-100%);">49 %</div><div class="r" style="left:420px;top:767px;width:585px;height:0.7px;background:#dedee2;border-radius:0px;"></div>
</body></html>
